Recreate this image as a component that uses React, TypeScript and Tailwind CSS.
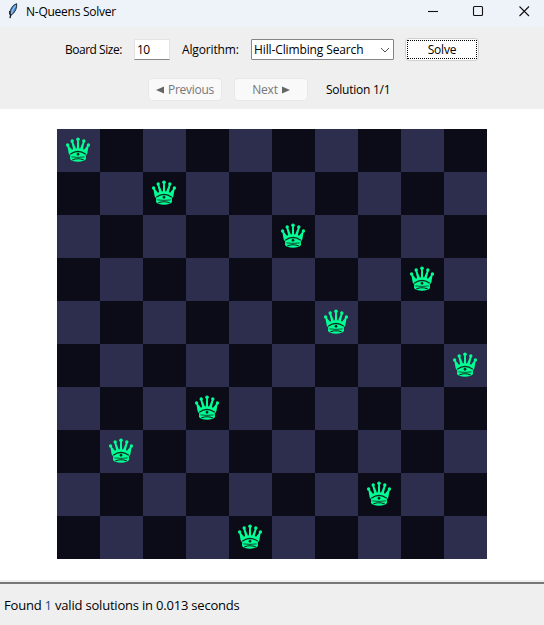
import React from "react";

const QUEENS = [0, 2, 5, 8, 6, 9, 3, 1, 7, 4];

function Queen() {
  return (
    <svg width="26" height="26" viewBox="0 0 26 26" fill="#00ff95">
      <circle cx="2.6" cy="8" r="1.7" />
      <circle cx="7.2" cy="4" r="1.7" />
      <circle cx="13" cy="2.2" r="1.8" />
      <circle cx="18.8" cy="4" r="1.7" />
      <circle cx="23.4" cy="8" r="1.7" />
      <path d="M2.3 8.8 L3.4 8.2 L7 12.8 L8.1 12 L6.3 4.8 L8 4.4 L10.9 11.4 L11.9 11.2 L12.1 3 L13.9 3 L14.1 11.2 L15.1 11.4 L18 4.4 L19.7 4.8 L17.9 12 L19 12.8 L22.6 8.2 L23.7 8.8 L22.3 16.5 L20.8 18.6 L21 22 Q19 24.6 13 24.7 Q7 24.6 5 22 L5.2 18.6 L3.7 16.5 Z" />
      <g fill="none" stroke="#10291f" strokeWidth="1.1">
        <path d="M5.2 17.3 Q13 11.4 20.8 17.3" />
        <path d="M6.4 19.9 Q13 20.9 19.6 19.9" strokeWidth="0.8" />
        <path d="M7.2 22.9 Q13 20.7 18.8 22.9" />
      </g>
      <path d="M13 15.3 L14.7 17.2 L13 19.1 L11.3 17.2 Z" fill="#10291f" />
    </svg>
  );
}

function Feather() {
  return (
    <svg width="12" height="16" viewBox="0 0 12 16">
      <path d="M9.6 0.7 Q6.6 1.6 4.7 4.6 Q2.8 7.6 2.9 10.8 L4.2 12 Q7.2 10.4 8.7 6.8 Q10.1 3.4 9.6 0.7 Z" fill="#4f94dc" stroke="#20262e" strokeWidth="1" />
      <path d="M8.6 2.5 Q5.6 6.5 4 11" fill="none" stroke="#b9dcf8" strokeWidth="0.8" />
      <path d="M2.7 8 L2.9 11.2 L3.7 12 L3 15.2" fill="none" stroke="#15181c" strokeWidth="1.3" />
    </svg>
  );
}

export default function App() {
  return (
    <div className="flex h-[625px] w-[544px] flex-col overflow-hidden whitespace-nowrap bg-[#efefef] text-xs text-black [font-family:'Open_Sans','Noto_Sans',sans-serif]">
      <header className="flex h-[27px] shrink-0 items-start bg-[#eef3fa]">
        <div className="ml-[7px] mt-[3px]"><Feather /></div>
        <span className="ml-[7px] mt-[4px] leading-4 tracking-[-0.25px]">N-Queens Solver</span>
        <svg className="ml-auto mr-[14px] mt-[5px]" width="103" height="13" viewBox="0 0 103 13" fill="none" stroke="#111" strokeWidth="1.1">
          <path d="M1 6.5 H11" />
          <rect x="46.5" y="1.5" width="9" height="9" rx="1" />
          <path d="M92.5 1.5 L102 11 M102 1.5 L92.5 11" />
        </svg>
      </header>
      <section className="h-[82px] shrink-0 pt-[11px]">
        <div className="flex h-[23px] items-center pl-[65px]">
          <span className="w-[69px] tracking-[-0.48px]">Board Size:</span>
          <div className="flex h-[21px] w-[36px] items-center border border-[#e4e4e4] border-b-[#858585] bg-white pl-[2px] tracking-[-0.5px]">10</div>
          <span className="ml-[12px] w-[68px] tracking-[-0.15px]">Algorithm:</span>
          <div className="ml-px flex h-[21px] w-[143px] items-center justify-between rounded-[1px] border border-[#858585] bg-white pl-[2px] pr-[3px]">
            <span className="tracking-[-0.12px]">Hill-Climbing Search</span>
            <svg width="10" height="6" viewBox="0 0 10 6" fill="none" stroke="#555"><path d="M1 1 L5 5 L9 1" /></svg>
          </div>
          <div className="ml-[11px] h-[23px] w-[74px] rounded-[4px] border border-[#d0d0d0] bg-[#fdfdfd] p-px">
            <div className="flex h-[19px] w-[70px] items-center justify-center border border-dotted border-black tracking-[-0.2px]">Solve</div>
          </div>
        </div>
        <div className="mt-[17px] flex h-[23px] items-center pl-[148px] text-[#777]">
          <div className="flex h-[23px] w-[74px] items-center justify-center gap-[4px] rounded-[4px] border border-[#e8e8e8] bg-[#f9f9f9] tracking-[-0.25px]">
            <svg width="8" height="8" fill="#666"><path d="M0 4 L8 0.5 V7.5 Z" /></svg>Previous
          </div>
          <div className="ml-[12px] flex h-[23px] w-[74px] items-center justify-center gap-[4px] rounded-[4px] border border-[#e8e8e8] bg-[#f9f9f9] tracking-[-0.15px]">
            Next<svg width="8" height="8" fill="#666"><path d="M8 4 L0 0.5 V7.5 Z" /></svg>
          </div>
          <span className="ml-[18px] tracking-[-0.25px] text-black">Solution 1/1</span>
        </div>
      </section>
      <main className="h-[471px] shrink-0 bg-white pl-[57px] pt-[20px]">
        <div className="grid w-[430px] grid-cols-10">
          {QUEENS.flatMap((queen, row) =>
            QUEENS.map((_, col) => (
              <div key={`${row}-${col}`} className={`h-[43px] pl-[8px] pt-[8px] ${(row + col) % 2 ? "bg-[#0c0c18]" : "bg-[#2d2d4d]"}`}>
                {queen === col && <Queen />}
              </div>
            ))
          )}
        </div>
      </main>
      <footer className="mt-[2px] h-[43px] border-t-2 border-t-[#777] pl-[4px] pt-[12px] text-[13px] leading-[18px] tracking-[-0.2px]">
        Found <span className="text-[#174f8c]">1</span> valid solutions in 0.013 seconds
      </footer>
    </div>
  );
}
